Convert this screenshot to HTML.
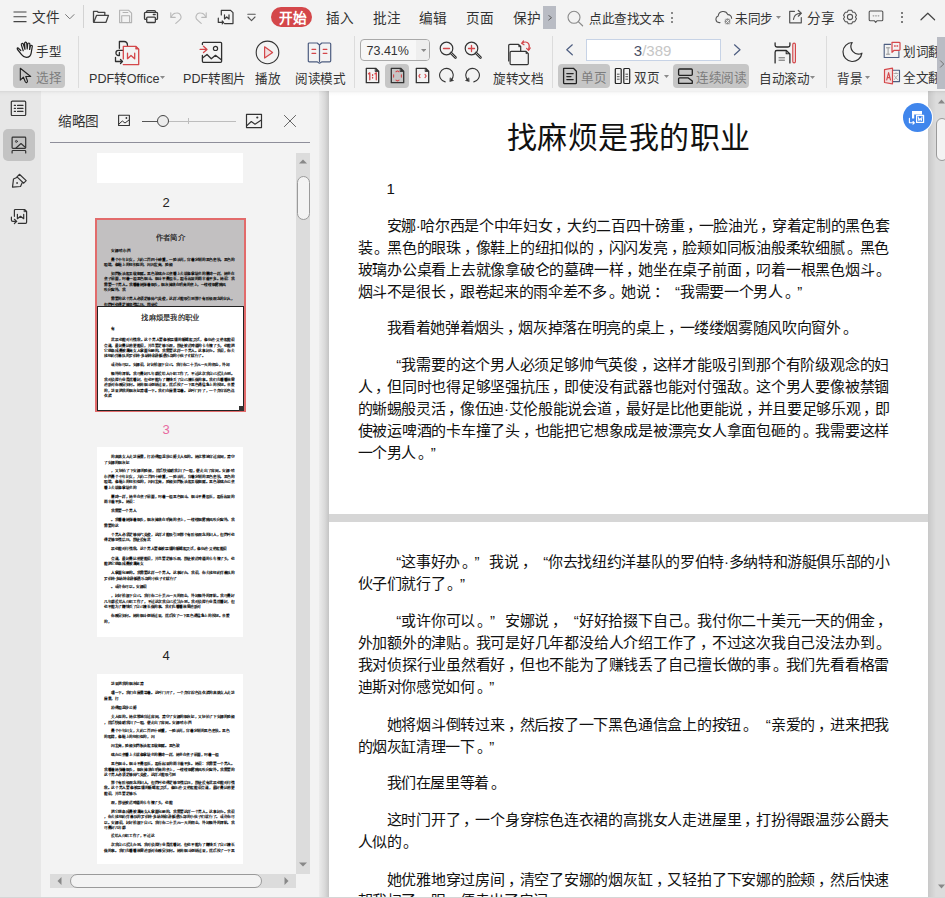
<!DOCTYPE html><html lang="zh-CN"><head><meta charset="utf-8"><style>
*{margin:0;padding:0;box-sizing:border-box}
html,body{width:945px;height:898px;overflow:hidden;background:#f3f3f3;font-family:"Liberation Sans",sans-serif;color:#333}
.a{position:absolute;white-space:nowrap}
.pg{position:absolute;background:#fff;overflow:hidden}
.ln{position:absolute;white-space:nowrap;color:#111;font-size:15px;line-height:21px;letter-spacing:-0.35px}
.q1{display:inline-block;width:14.8px;text-align:right;text-align-last:right;letter-spacing:0}
.q2{display:inline-block;width:14.8px;text-align:left;text-align-last:left;letter-spacing:0}
.tl{position:absolute;white-space:nowrap;color:#000;font-size:15px;line-height:21px;letter-spacing:-0.35px;-webkit-text-stroke:0.65px #000}
.j{text-align:justify;text-align-last:justify}
.cm{position:relative;left:3px}
.cm2{position:relative;left:2px}
</style></head><body><div class="a" style="left:0px;top:0px;width:945px;height:91px;background:#f3f3f3"></div>
<svg class="a" style="left:13px;top:11px;" width="14" height="12" viewBox="0 0 14 12" fill="none" stroke="#333" stroke-width="1.2" stroke-linecap="round" stroke-linejoin="round"><path d="M0.5 1H13.5M0.5 5.8H13.5M0.5 10.6H13.5" stroke="#444" stroke-width="1.1" stroke-linecap="butt"/></svg>
<div class="a" style="left:31.5px;top:6.6px;font-size:13px;line-height:20px;color:#333;transform:scale(1.05);transform-origin:0 0;">文件</div>
<svg class="a" style="left:65px;top:14px;" width="10" height="6" viewBox="0 0 10 6" fill="none" stroke="#333" stroke-width="1.2" stroke-linecap="round" stroke-linejoin="round"><path d="M0.6 0.6L4.8 4.8L9 0.6" stroke="#777" stroke-width="1"/></svg>
<div class="a" style="left:83px;top:5px;width:1px;height:23px;background:#d3d3d3"></div>
<svg class="a" style="left:92px;top:10px;" width="18" height="14" viewBox="0 0 18 14" fill="none" stroke="#333" stroke-width="1.2" stroke-linecap="round" stroke-linejoin="round"><path d="M1.5 12V1.3H5.2L6.2 2.3H12.8V5.2" stroke="#444" stroke-width="1.3"/><path d="M4.5 5.4H16.5L14 12.3H1.8Z" stroke="#444" stroke-width="1.3"/></svg>
<svg class="a" style="left:118px;top:9px;" width="15" height="15" viewBox="0 0 15 15" fill="none" stroke="#333" stroke-width="1.2" stroke-linecap="round" stroke-linejoin="round"><path d="M1.6 1.3H10.7L13.6 4.2V13.6H1.6Z" stroke="#b3b3b3" stroke-width="1.1"/><path d="M5 3.5H9.8M3.7 13.3V6.7H11.6V13.3" stroke="#b3b3b3" stroke-width="1.1"/></svg>
<svg class="a" style="left:143px;top:9px;" width="16" height="15" viewBox="0 0 16 15" fill="none" stroke="#333" stroke-width="1.2" stroke-linecap="round" stroke-linejoin="round"><path d="M3.7 3.3V2.5Q3.7 1.6 4.6 1.6H11.5Q12.4 1.6 12.4 2.5V3.3" stroke="#3c3c3c" stroke-width="1.3"/><path d="M3.6 10.3H2.4Q1.5 10.3 1.5 9.4V4.3Q1.5 3.4 2.4 3.4H13.6Q14.5 3.4 14.5 4.3V9.4Q14.5 10.3 13.6 10.3H12.4" stroke="#3c3c3c" stroke-width="1.3"/><path d="M4.6 8.2H11.5Q12.4 8.2 12.4 9.1V12.6Q12.4 13.5 11.5 13.5H4.6Q3.7 13.5 3.7 12.6V9.1Q3.7 8.2 4.6 8.2Z M10.3 5.5H12.2" stroke="#3c3c3c" stroke-width="1.3"/></svg>
<svg class="a" style="left:169px;top:11px;" width="14" height="13" viewBox="0 0 14 13" fill="none" stroke="#333" stroke-width="1.2" stroke-linecap="round" stroke-linejoin="round"><path d="M1.8 1.8V6.4H6.2" stroke="#b8b8b8" stroke-width="1.1"/><path d="M2.2 6C3.5 3.2 5.5 2 7.5 2A4 4 0 0 1 10.2 9.3L6.8 12.4" stroke="#b8b8b8" stroke-width="1.1"/></svg>
<svg class="a" style="left:194px;top:11px;" width="14" height="13" viewBox="0 0 14 13" fill="none" stroke="#333" stroke-width="1.2" stroke-linecap="round" stroke-linejoin="round"><path d="M12.2 1.8V6.4H7.8" stroke="#b8b8b8" stroke-width="1.1"/><path d="M11.8 6C10.5 3.2 8.5 2 6.5 2A4 4 0 0 0 3.8 9.3L7.2 12.4" stroke="#b8b8b8" stroke-width="1.1"/></svg>
<svg class="a" style="left:217px;top:9px;" width="17" height="16" viewBox="0 0 17 16" fill="none" stroke="#333" stroke-width="1.2" stroke-linecap="round" stroke-linejoin="round"><path d="M4.3 6V1.3H13.6L16 3.7V14.6H7.5" stroke="#3a3a3a" stroke-width="1.2"/><path d="M1.3 9.2V13.4H6.6M5.2 12L6.6 13.4L5.2 14.8" stroke="#3a3a3a" stroke-width="1.2"/><path d="M7.5 5.8V10L9.7 8L12 10V5.8" stroke="#3a3a3a" stroke-width="1.2"/></svg>
<svg class="a" style="left:247px;top:13px;" width="9" height="9" viewBox="0 0 9 9" fill="none" stroke="#333" stroke-width="1.2" stroke-linecap="round" stroke-linejoin="round"><path d="M0.8 1.3H8.2" stroke="#555" stroke-width="1.1"/><path d="M1 4L4.5 7.6L8 4" stroke="#555" stroke-width="1.1"/></svg>
<div class="a" style="left:271px;top:7px;width:41px;height:20px;background:#d4474a;border-radius:10px"></div>
<div class="a" style="left:278.5px;top:7.7px;font-size:13px;line-height:20px;color:#fff;transform:scale(1.05);transform-origin:0 0;font-weight:bold">开始</div>
<div class="a" style="left:325.8px;top:8.0px;font-size:13px;line-height:20px;color:#333;transform:scale(1.05);transform-origin:0 0;">插入</div>
<div class="a" style="left:373.2px;top:8.0px;font-size:13px;line-height:20px;color:#333;transform:scale(1.05);transform-origin:0 0;">批注</div>
<div class="a" style="left:419.0px;top:8.0px;font-size:13px;line-height:20px;color:#333;transform:scale(1.05);transform-origin:0 0;">编辑</div>
<div class="a" style="left:466.0px;top:8.0px;font-size:13px;line-height:20px;color:#333;transform:scale(1.05);transform-origin:0 0;">页面</div>
<div class="a" style="left:513.2px;top:8.0px;font-size:13px;line-height:20px;color:#333;transform:scale(1.05);transform-origin:0 0;">保护</div>
<div class="a" style="left:543px;top:6px;width:13px;height:23px;background:#b9bcc4"></div>
<svg class="a" style="left:547.5px;top:14.5px;" width="5" height="6" viewBox="0 0 5 6" fill="none" stroke="#333" stroke-width="1.2" stroke-linecap="round" stroke-linejoin="round"><path d="M0.7 0.5L3.5 2.7L0.7 5" stroke="#555" stroke-width="0.9"/></svg>
<svg class="a" style="left:567px;top:10px;" width="17" height="17" viewBox="0 0 17 17" fill="none" stroke="#333" stroke-width="1.2" stroke-linecap="round" stroke-linejoin="round"><circle cx="7" cy="7.3" r="6" stroke="#8a8a8a" stroke-width="1.1"/><path d="M11.3 11.6L15.6 15.8" stroke="#8a8a8a" stroke-width="1.2"/></svg>
<div class="a" style="left:589.2px;top:7.8px;font-size:12px;line-height:20px;color:#333;transform:scale(1.05);transform-origin:0 0;">点此查找文本</div>
<div class="a" style="left:670.5px;top:12px;width:2px;height:2px;background:#666;border-radius:1px"></div>
<div class="a" style="left:670.5px;top:16.5px;width:2px;height:2px;background:#666;border-radius:1px"></div>
<div class="a" style="left:670.5px;top:21px;width:2px;height:2px;background:#666;border-radius:1px"></div>
<svg class="a" style="left:715px;top:9px;" width="18" height="16" viewBox="0 0 18 16" fill="none" stroke="#333" stroke-width="1.2" stroke-linecap="round" stroke-linejoin="round"><path d="M5 13.6H4.2A3.4 3.4 0 0 1 3.2 7A5 5 0 0 1 12.8 5.6A3.6 3.6 0 0 1 16.6 9.2" stroke="#555" stroke-width="1.1"/><circle cx="12.6" cy="12.4" r="3.4" fill="#8e8e8e" stroke="#f3f3f3" stroke-width="0.8"/><path d="M11.3 11.1L13.9 13.7M13.9 11.1L11.3 13.7" stroke="#fff" stroke-width="0.9"/></svg>
<div class="a" style="left:735.0px;top:8.0px;font-size:12px;line-height:20px;color:#333;transform:scale(1.05);transform-origin:0 0;">未同步</div>
<svg class="a" style="left:776px;top:16px;" width="5" height="3" viewBox="0 0 5 3" fill="none" stroke="#333" stroke-width="1.2" stroke-linecap="round" stroke-linejoin="round"><path d="M0 0H5L2.5 3Z" fill="#8a8a8a" stroke="none"/></svg>
<svg class="a" style="left:788px;top:9px;" width="16" height="15" viewBox="0 0 16 15" fill="none" stroke="#333" stroke-width="1.2" stroke-linecap="round" stroke-linejoin="round"><path d="M6.5 2.3H1.7V13.8H13.3V8.5" stroke="#555" stroke-width="1.2"/><path d="M5.5 10.3C6 6.2 8.2 4.3 12.8 4.3" stroke="#555" stroke-width="1.2"/><path d="M10.3 1.5L13.3 4.3L10.3 7.2" stroke="#555" stroke-width="1.2"/></svg>
<div class="a" style="left:807.4px;top:8.0px;font-size:13px;line-height:20px;color:#333;transform:scale(1.05);transform-origin:0 0;">分享</div>
<svg class="a" style="left:842px;top:9px;" width="16" height="16" viewBox="0 0 16 16" fill="none" stroke="#333" stroke-width="1.2" stroke-linecap="round" stroke-linejoin="round"><path d="M6.3 1.3H9.7L10.6 3.1L12.7 3.3L14.5 6.2L13.4 8L14.5 9.8L12.7 12.7L10.6 12.9L9.7 14.7H6.3L5.4 12.9L3.3 12.7L1.5 9.8L2.6 8L1.5 6.2L3.3 3.3L5.4 3.1Z" stroke="#555" stroke-width="1.1"/><circle cx="8" cy="8" r="2.6" stroke="#555" stroke-width="1.1"/></svg>
<svg class="a" style="left:868px;top:10px;" width="16" height="14" viewBox="0 0 16 14" fill="none" stroke="#333" stroke-width="1.2" stroke-linecap="round" stroke-linejoin="round"><path d="M2.2 1H13.8Q14.8 1 14.8 2V9.7Q14.8 10.7 13.8 10.7H9.2L7.7 12.3L6.2 10.7H2.2Q1.2 10.7 1.2 9.7V2Q1.2 1 2.2 1Z" stroke="#555" stroke-width="1.1"/><path d="M5.2 5.8H5.8M7.7 5.8H8.3M10.2 5.8H10.8" stroke="#9a9a9a" stroke-width="1.3"/></svg>
<div class="a" style="left:901px;top:11.5px;width:2px;height:2px;background:#555;border-radius:1px"></div>
<div class="a" style="left:901px;top:16px;width:2px;height:2px;background:#555;border-radius:1px"></div>
<div class="a" style="left:901px;top:20.8px;width:2px;height:2px;background:#555;border-radius:1px"></div>
<svg class="a" style="left:920px;top:12px;" width="16" height="9" viewBox="0 0 16 9" fill="none" stroke="#333" stroke-width="1.2" stroke-linecap="round" stroke-linejoin="round"><path d="M1 7.8L7.8 1.2L14.6 7.8" stroke="#444" stroke-width="1.2"/></svg>
<svg class="a" style="left:16px;top:41px;" width="18" height="18" viewBox="0 0 18 18" fill="none" stroke="#333" stroke-width="1.2" stroke-linecap="round" stroke-linejoin="round"><path d="M4.8 9.5L2.6 7.3Q1.4 6.4 1.2 7.6Q1.2 8.3 1.9 9L5.6 13.6Q7.6 16.3 10.3 16.3Q14.6 16.3 15.2 11.8L16.3 5.4Q16.4 4.3 15.4 4.3Q14.6 4.3 14.3 5.4L13.6 8.5L13.9 3.2Q13.9 2 12.8 2Q11.9 2 11.7 3.2L11.2 8L10.7 2.1Q10.5 1 9.5 1.1Q8.5 1.3 8.6 2.4L9 8.4L7.4 3.3Q7 2.2 6 2.5Q5.1 2.9 5.4 4L7.2 9.8" stroke="#222" stroke-width="1.2"/></svg>
<div class="a" style="left:36.0px;top:40.8px;font-size:12px;line-height:20px;color:#333;transform:scale(1.05);transform-origin:0 0;">手型</div>
<div class="a" style="left:13px;top:64px;width:52px;height:24px;background:#c6c6c6;border-radius:4px"></div>
<svg class="a" style="left:19px;top:67px;" width="14" height="18" viewBox="0 0 14 18" fill="none" stroke="#333" stroke-width="1.2" stroke-linecap="round" stroke-linejoin="round"><path d="M1.3 1.3V13.2L4.4 10.2L6.3 14.8Q6.9 15.9 7.9 15.4Q8.8 14.9 8.4 13.8L6.8 9.5H11.7Z" stroke="#222" stroke-width="1.1"/></svg>
<div class="a" style="left:36.0px;top:67.2px;font-size:12px;line-height:20px;color:#7d7d7d;transform:scale(1.05);transform-origin:0 0;">选择</div>
<div class="a" style="left:78px;top:36px;width:1px;height:52px;background:#dcdcdc"></div>
<svg class="a" style="left:113px;top:40px;" width="27" height="26" viewBox="0 0 27 26" fill="none" stroke="#333" stroke-width="1.2" stroke-linecap="round" stroke-linejoin="round"><path d="M6.4 8.3V1.5H11C13 1.5 14.5 3 14.5 5.5" stroke="#2f2f2f" stroke-width="1.3"/><path d="M9.8 10.4H5.5A2.5 2.5 0 0 0 5.5 15.5H6.4V12.5" stroke="#2f2f2f" stroke-width="1.3"/><path d="M2.5 17.3V21.5H9.5M7.5 19.5L9.5 21.5L7.5 23.5" stroke="#2f2f2f" stroke-width="1.3"/><path d="M10.3 18.9V6.4H23L25.7 9.1V24.6H10.3" stroke="#d4474a" stroke-width="1.3"/><path d="M14.5 13.2V18.7L18 15.5L21.7 18.7V13.2" stroke="#d4474a" stroke-width="1.3"/><path d="M23 6.6L25.5 9.1H23Z" fill="#d4474a" stroke="#d4474a" stroke-width="0.8"/></svg>
<div class="a" style="left:88.7px;top:67.7px;font-size:12px;line-height:20px;color:#333;transform:scale(1.05);transform-origin:0 0;">PDF转Office</div>
<svg class="a" style="left:160px;top:75.5px;" width="5" height="3" viewBox="0 0 5 3" fill="none" stroke="#333" stroke-width="1.2" stroke-linecap="round" stroke-linejoin="round"><path d="M0 0H5L2.5 3Z" fill="#8a8a8a" stroke="none"/></svg>
<svg class="a" style="left:199px;top:41px;" width="24" height="23" viewBox="0 0 24 23" fill="none" stroke="#333" stroke-width="1.2" stroke-linecap="round" stroke-linejoin="round"><path d="M3.4 3.6V2.3A1 1 0 0 1 4.4 1.3H21.6A1 1 0 0 1 22.6 2.3V20.3A1 1 0 0 1 21.6 21.3H4.4A1 1 0 0 1 3.4 20.3V14.4" stroke="#2f2f2f" stroke-width="1.3"/><path d="M3.5 17L8 13.5L12.3 17.8L16.5 14.3L22.3 18.8" stroke="#2f2f2f" stroke-width="1.3"/><circle cx="16.5" cy="7.4" r="2.1" stroke="#2f2f2f" stroke-width="1.2"/><path d="M1.1 8.4H8M4.5 5.2L8 8.4L4.5 11.6" stroke="#d4474a" stroke-width="1.3"/></svg>
<div class="a" style="left:182.5px;top:67.6px;font-size:12px;line-height:20px;color:#333;transform:scale(1.05);transform-origin:0 0;">PDF转图片</div>
<svg class="a" style="left:255px;top:40px;" width="25" height="25" viewBox="0 0 25 25" fill="none" stroke="#333" stroke-width="1.2" stroke-linecap="round" stroke-linejoin="round"><circle cx="12.5" cy="12.4" r="11.3" stroke="#333" stroke-width="1.1"/><path d="M9.6 6.8L17.6 12.4L9.6 18Z" stroke="#d4474a" fill="#f1dfe0" stroke-width="1.2"/></svg>
<div class="a" style="left:255.0px;top:67.9px;font-size:12px;line-height:20px;color:#333;transform:scale(1.05);transform-origin:0 0;">播放</div>
<svg class="a" style="left:307px;top:42px;" width="26" height="22" viewBox="0 0 26 22" fill="none" stroke="#333" stroke-width="1.2" stroke-linecap="round" stroke-linejoin="round"><path d="M2.3 1H10.2L12.5 3L14.8 1H22.7Q23.7 1 23.7 2V18.8Q23.7 19.8 22.7 19.8H15L12.5 21.2L10 19.8H2.3Q1.3 19.8 1.3 18.8V2Q1.3 1 2.3 1Z M12.5 3V19.5" stroke="#4d5d80" stroke-width="1.2"/><path d="M5 7.3H8.7M5 11.3H8.7M16.2 7.3H19.9M16.2 11.3H19.9" stroke="#d4474a" stroke-width="1.3"/></svg>
<div class="a" style="left:295.3px;top:67.9px;font-size:12px;line-height:20px;color:#333;transform:scale(1.05);transform-origin:0 0;">阅读模式</div>
<div class="a" style="left:354px;top:36px;width:1px;height:52px;background:#dcdcdc"></div>
<div class="a" style="left:360px;top:39px;width:70px;height:22px;background:#f7f7f7;border:1.2px solid #a9a9a9;border-radius:4px"></div>
<div class="a" style="left:416.3px;top:40.2px;width:12.5px;height:19.6px;background:#eeeeee;border-radius:0 3px 3px 0"></div>
<svg class="a" style="left:420.8px;top:48.8px;" width="5.4" height="3" viewBox="0 0 5.4 3" fill="none" stroke="#333" stroke-width="1.2" stroke-linecap="round" stroke-linejoin="round"><path d="M0 0H5.4L2.7 3Z" fill="#8a8a8a" stroke="none"/></svg>
<div class="a" style="left:366.5px;top:42px;font-size:12.5px;line-height:18px;color:#333">73.41%</div>
<svg class="a" style="left:439px;top:41px;" width="19" height="19" viewBox="0 0 19 19" fill="none" stroke="#333" stroke-width="1.2" stroke-linecap="round" stroke-linejoin="round"><circle cx="7.5" cy="7.5" r="6.3" stroke="#333" stroke-width="1.2"/><path d="M12 12L16.5 16.5" stroke="#333" stroke-width="2.6"/><path d="M12 12L16.5 16.5" stroke="#f3f3f3" stroke-width="0.6"/><path d="M4.5 7.5H10.5" stroke="#d4474a" stroke-width="1.3"/></svg>
<svg class="a" style="left:464px;top:41px;" width="19" height="19" viewBox="0 0 19 19" fill="none" stroke="#333" stroke-width="1.2" stroke-linecap="round" stroke-linejoin="round"><circle cx="7.5" cy="7.5" r="6.3" stroke="#333" stroke-width="1.2"/><path d="M12 12L16.5 16.5" stroke="#333" stroke-width="2.6"/><path d="M12 12L16.5 16.5" stroke="#f3f3f3" stroke-width="0.6"/><path d="M4.5 7.5H10.5M7.5 4.5V10.5" stroke="#d4474a" stroke-width="1.3"/></svg>
<svg class="a" style="left:504px;top:39px;" width="28" height="27" viewBox="0 0 28 27" fill="none" stroke="#333" stroke-width="1.2" stroke-linecap="round" stroke-linejoin="round"><path d="M4.7 22V6.5Q4.7 5.3 5.9 5.3H14.5L16.7 7.5V12" stroke="#333" stroke-width="1.2"/><path d="M7.3 12.3H22L24.3 14.6V24.5Q24.3 25.6 23.2 25.6H7.3Q6.1 25.6 6.1 24.5V13.5Q6.1 12.3 7.3 12.3Z" stroke="#333" fill="#f3f3f3" stroke-width="1.2"/><path d="M15 6L16.5 7.4L15.2 7.8Z M22.3 13L23.5 14.3L22.4 14.6Z" fill="#333" stroke="#333" stroke-width="0.8"/><path d="M18.5 4.2C20 2.5 23 2.5 24.6 4.7C25.6 6.3 25.5 8.3 24.6 10.5" stroke="#d4474a" stroke-width="1.2"/><path d="M19.5 2L17.6 4.3L20 5.8M22.6 9.3L24.6 11.3L26.3 9" stroke="#d4474a" stroke-width="1.2"/></svg>
<div class="a" style="left:493.2px;top:67.9px;font-size:12px;line-height:20px;color:#333;transform:scale(1.05);transform-origin:0 0;">旋转文档</div>
<svg class="a" style="left:365px;top:67px;" width="15" height="17" viewBox="0 0 15 17" fill="none" stroke="#333" stroke-width="1.2" stroke-linecap="round" stroke-linejoin="round"><path d="M1.3 1.3H10.7L13.7 4.3V15.7H1.3Z" stroke="#333" stroke-width="1.3"/><path d="M10.5 1.5L13.5 4.5H10.5Z" fill="#333" stroke="#333" stroke-width="0.8"/><path d="M3.5 6.8L4.8 5.8V12.8M10 6.8L11.3 5.8V12.8M7.6 7.6V8.4M7.6 10.3V11.1" stroke="#d4474a" stroke-width="1.3"/></svg>
<div class="a" style="left:385px;top:64px;width:24px;height:24px;background:#c6c6c6;border-radius:4px"></div>
<svg class="a" style="left:390px;top:67px;" width="15" height="17" viewBox="0 0 15 17" fill="none" stroke="#333" stroke-width="1.2" stroke-linecap="round" stroke-linejoin="round"><path d="M1.3 1.3H10.7L13.7 4.3V15.7H1.3Z" stroke="#333" stroke-width="1.3"/><path d="M10.5 1.5L13.5 4.5H10.5Z" fill="#333" stroke="#333" stroke-width="0.8"/><path d="M6 4.8L7.5 3.9L9 4.8M6 13.1L7.5 14L9 13.1M3.6 7.8V10.1M11.4 7.8V10.1" stroke="#d4474a" stroke-width="1.1"/></svg>
<svg class="a" style="left:415px;top:67px;" width="15" height="17" viewBox="0 0 15 17" fill="none" stroke="#333" stroke-width="1.2" stroke-linecap="round" stroke-linejoin="round"><path d="M1.3 1.3H10.7L13.7 4.3V15.7H1.3Z" stroke="#333" stroke-width="1.3"/><path d="M10.5 1.5L13.5 4.5H10.5Z" fill="#333" stroke="#333" stroke-width="0.8"/><path d="M5 7.4L3.8 9L5 10.6M10 7.4L11.2 9L10 10.6" stroke="#d4474a" stroke-width="1.1"/></svg>
<svg class="a" style="left:439px;top:67px;" width="16" height="17" viewBox="0 0 16 17" fill="none" stroke="#333" stroke-width="1.2" stroke-linecap="round" stroke-linejoin="round"><path d="M6.2 14.9A6.8 6.8 0 1 1 12.6 12.6" stroke="#333" stroke-width="1.1"/><path d="M11.1 14.4L14.5 13.5L11.4 11Z" fill="#333" stroke="#333" stroke-width="0.6"/></svg>
<svg class="a" style="left:464px;top:67px;" width="16" height="17" viewBox="0 0 16 17" fill="none" stroke="#333" stroke-width="1.2" stroke-linecap="round" stroke-linejoin="round"><path d="M9.8 14.9A6.8 6.8 0 1 0 3.4 12.6" stroke="#333" stroke-width="1.1"/><path d="M4.9 14.4L1.5 13.5L4.6 11Z" fill="#333" stroke="#333" stroke-width="0.6"/></svg>
<div class="a" style="left:552px;top:36px;width:1px;height:52px;background:#dcdcdc"></div>
<svg class="a" style="left:565px;top:44px;" width="9" height="12" viewBox="0 0 9 12" fill="none" stroke="#333" stroke-width="1.2" stroke-linecap="round" stroke-linejoin="round"><path d="M7.3 0.8L1.8 5.8L7.3 10.8" stroke="#4d5d80" stroke-width="1.2"/></svg>
<div class="a" style="left:586px;top:39px;width:135px;height:22px;background:#fff;border:1px solid #c7d3e6"></div>
<div class="a" style="left:633.8px;top:41px;font-size:15px;line-height:20px"><span style="color:#4a5066">3</span><span style="color:#c6c6c6">/389</span></div>
<svg class="a" style="left:733px;top:44px;" width="9" height="12" viewBox="0 0 9 12" fill="none" stroke="#333" stroke-width="1.2" stroke-linecap="round" stroke-linejoin="round"><path d="M1.5 0.8L7 5.8L1.5 10.8" stroke="#4d5d80" stroke-width="1.2"/></svg>
<div class="a" style="left:558px;top:64px;width:52px;height:24px;background:#c6c6c6;border-radius:4px"></div>
<svg class="a" style="left:562px;top:67px;" width="16" height="18" viewBox="0 0 16 18" fill="none" stroke="#333" stroke-width="1.2" stroke-linecap="round" stroke-linejoin="round"><path d="M1.6 1.3H11.4L14.4 4.3V15.8Q14.4 16.7 13.5 16.7H2.5Q1.6 16.7 1.6 15.8Z" stroke="#222" stroke-width="1.3"/><path d="M4.8 6.6H11.2M4.8 9.6H9M4.8 12.6H11.2" stroke="#222" stroke-width="1.2"/></svg>
<div class="a" style="left:581.0px;top:67.2px;font-size:12px;line-height:20px;color:#7d7d7d;transform:scale(1.05);transform-origin:0 0;">单页</div>
<svg class="a" style="left:614px;top:67px;" width="17" height="18" viewBox="0 0 17 18" fill="none" stroke="#333" stroke-width="1.2" stroke-linecap="round" stroke-linejoin="round"><path d="M2.3 1.5H6.2Q7.2 1.5 7.2 2.5V15.5Q7.2 16.5 6.2 16.5H2.3Q1.3 16.5 1.3 15.5V2.5Q1.3 1.5 2.3 1.5Z M10.8 1.5H14.7Q15.7 1.5 15.7 2.5V15.5Q15.7 16.5 14.7 16.5H10.8Q9.8 16.5 9.8 15.5V2.5Q9.8 1.5 10.8 1.5Z" stroke="#222" stroke-width="1.2"/><path d="M3.3 7.2H5.2M3.3 9.7H5.2M3.3 12.2H5.2M11.8 7.2H13.7M11.8 9.7H13.7M11.8 12.2H13.7" stroke="#555" stroke-width="1"/></svg>
<div class="a" style="left:634.0px;top:67.2px;font-size:12px;line-height:20px;color:#333;transform:scale(1.05);transform-origin:0 0;">双页</div>
<svg class="a" style="left:663.5px;top:75px;" width="5" height="3" viewBox="0 0 5 3" fill="none" stroke="#333" stroke-width="1.2" stroke-linecap="round" stroke-linejoin="round"><path d="M0 0H5L2.5 3Z" fill="#8a8a8a" stroke="none"/></svg>
<div class="a" style="left:673px;top:64px;width:76px;height:24px;background:#c6c6c6;border-radius:4px"></div>
<svg class="a" style="left:677px;top:67px;" width="17" height="18" viewBox="0 0 17 18" fill="none" stroke="#333" stroke-width="1.2" stroke-linecap="round" stroke-linejoin="round"><path d="M2.5 2H14.3Q15.3 2 15.3 3V7.5Q15.3 8.3 14.3 8.3H2.5Q1.6 8.3 1.6 7.5V3Q1.6 2 2.5 2Z" stroke="#222" stroke-width="1.3"/><path d="M1.6 16.3V11.8Q1.6 10.8 2.5 10.8H11L15.3 14V16.3H1.6Z" stroke="#222" stroke-width="1.3"/></svg>
<div class="a" style="left:696.0px;top:67.2px;font-size:12px;line-height:20px;color:#7d7d7d;transform:scale(1.05);transform-origin:0 0;">连续阅读</div>
<svg class="a" style="left:774px;top:42px;" width="23" height="22" viewBox="0 0 23 22" fill="none" stroke="#333" stroke-width="1.2" stroke-linecap="round" stroke-linejoin="round"><path d="M1.1 0.8V3.2Q1.1 5 2.9 5H14.1Q15.9 5 15.9 3.2V0.8" stroke="#2c2c2c" stroke-width="1.3"/><path d="M1.1 20.9V10.3Q1.1 8.5 2.9 8.5H12.3L15.9 12V20.9" stroke="#2c2c2c" stroke-width="1.3"/><path d="M12.2 8.8V11.8H15.5" stroke="#2c2c2c" stroke-width="1.1"/><path d="M5 15.8H10.5M5 18.2H10.5" stroke="#555" stroke-width="0.9"/><rect x="18.8" y="1.1" width="2.6" height="19.8" rx="1.3" stroke="#d4474a" stroke-width="1.2"/></svg>
<div class="a" style="left:758.5px;top:67.9px;font-size:12px;line-height:20px;color:#333;transform:scale(1.05);transform-origin:0 0;">自动滚动</div>
<svg class="a" style="left:809.5px;top:75.5px;" width="5" height="3" viewBox="0 0 5 3" fill="none" stroke="#333" stroke-width="1.2" stroke-linecap="round" stroke-linejoin="round"><path d="M0 0H5L2.5 3Z" fill="#8a8a8a" stroke="none"/></svg>
<div class="a" style="left:826px;top:36px;width:1px;height:52px;background:#dcdcdc"></div>
<svg class="a" style="left:842px;top:41px;" width="22" height="22" viewBox="0 0 22 22" fill="none" stroke="#333" stroke-width="1.2" stroke-linecap="round" stroke-linejoin="round"><path d="M10.15 1.51A9.5 9.5 0 1 0 19.93 12.17A7.5 7.5 0 0 1 10.15 1.51Z" stroke="#333" stroke-width="1.2"/></svg>
<div class="a" style="left:837.0px;top:67.9px;font-size:12px;line-height:20px;color:#333;transform:scale(1.05);transform-origin:0 0;">背景</div>
<svg class="a" style="left:864.6px;top:75.5px;" width="5" height="3" viewBox="0 0 5 3" fill="none" stroke="#333" stroke-width="1.2" stroke-linecap="round" stroke-linejoin="round"><path d="M0 0H5L2.5 3Z" fill="#8a8a8a" stroke="none"/></svg>
<svg class="a" style="left:883px;top:41px;" width="18" height="18" viewBox="0 0 18 18" fill="none" stroke="#333" stroke-width="1.2" stroke-linecap="round" stroke-linejoin="round"><path d="M7.6 3.4H1.2V16.5H15.9V10.5" stroke="#4d5d80" stroke-width="1.1"/><path d="M3.4 6.8H6.8M5.1 6.8V13.2M3.4 13.2H6.8" stroke="#9a9a9a" stroke-width="1"/><path d="M9 1.3H16.2Q17 1.3 17 2.1V8.5Q17 9.3 16.2 9.3H11.2L9 11.3Z" stroke="#d4474a" stroke-width="1.2"/><path d="M11.6 5H12.2M14 5H14.6" stroke="#d4474a" stroke-width="1.4"/></svg>
<div class="a" style="left:903.2px;top:40.8px;font-size:12px;line-height:20px;color:#333;transform:scale(1.05);transform-origin:0 0;">划词翻译</div>
<svg class="a" style="left:883px;top:67px;" width="18" height="18" viewBox="0 0 18 18" fill="none" stroke="#333" stroke-width="1.2" stroke-linecap="round" stroke-linejoin="round"><path d="M9 3.2H16.5V14.6H9" stroke="#4d5d80" stroke-width="1.1"/><path d="M11 6.5H15M13 5.6V6.5M11.3 12.6L14.7 8.2M11.5 8.8C12.5 10.7 13.6 12 15 12.7" stroke="#a0a0a0" stroke-width="0.8"/><path d="M1.5 2.7L9.5 1.2V16.8L1.5 15.5Z" stroke="#d4474a" fill="#f3e2e3" stroke-width="1.2"/><path d="M3.7 13L5.6 5.6L7.5 13M4.4 10.6H6.8" stroke="#d4474a" stroke-width="1.1"/></svg>
<div class="a" style="left:903.2px;top:66.7px;font-size:12px;line-height:20px;color:#333;transform:scale(1.05);transform-origin:0 0;">全文翻译</div>
<div class="a" style="left:937px;top:37px;width:8px;height:52px;background:#b9bcc4"></div>
<svg class="a" style="left:939px;top:60px;" width="6" height="8" viewBox="0 0 6 8" fill="none" stroke="#333" stroke-width="1.2" stroke-linecap="round" stroke-linejoin="round"><path d="M1.5 0.8L4.7 4L1.5 7.2" stroke="#6a6a6a" stroke-width="0.9"/></svg>
<div class="a" style="left:0px;top:91px;width:41px;height:807px;background:#e7e7e7"></div>
<svg class="a" style="left:10px;top:100px;" width="17" height="17" viewBox="0 0 17 17" fill="none" stroke="#333" stroke-width="1.2" stroke-linecap="round" stroke-linejoin="round"><path d="M2.3 1.2H14.7Q15.7 1.2 15.7 2.2V14.5Q15.7 15.5 14.7 15.5H2.3Q1.3 15.5 1.3 14.5V2.2Q1.3 1.2 2.3 1.2Z" stroke="#333" stroke-width="1.2"/><path d="M4.3 5.4H5.5M7.5 5.4H13M4.3 8.4H5.5M7.5 8.4H13M4.3 11.4H5.5M7.5 11.4H13" stroke="#333" stroke-width="1.1"/></svg>
<div class="a" style="left:3px;top:129px;width:32px;height:32px;background:#c3c3c3;border-radius:5px"></div>
<svg class="a" style="left:10px;top:135px;" width="18" height="19" viewBox="0 0 18 19" fill="none" stroke="#333" stroke-width="1.2" stroke-linecap="round" stroke-linejoin="round"><path d="M2.9 2.2H14.9Q15.7 2.2 15.7 3V12.5Q15.7 13.3 14.9 13.3H2.9Q2.1 13.3 2.1 12.5V3Q2.1 2.2 2.9 2.2Z" stroke="#333" stroke-width="1.2"/><path d="M6 13L11 8.5L15.5 12.5" stroke="#333" stroke-width="1.1"/><circle cx="6.4" cy="6.4" r="1" stroke="#333" stroke-width="0.9"/><path d="M2.1 18V16.3Q2.1 15.5 2.9 15.5H14.9Q15.7 15.5 15.7 16.3V18" stroke="#333" stroke-width="1.2"/></svg>
<svg class="a" style="left:10px;top:171px;" width="18" height="19" viewBox="0 0 18 19" fill="none" stroke="#333" stroke-width="1.2" stroke-linecap="round" stroke-linejoin="round"><path d="M9.4 3.3L16.2 9.6L13.7 12.2L7 5.9Z" stroke="#333" stroke-width="1.2"/><path d="M7.3 6.2L3.5 8L2.5 16.1L10.5 15.5L12.2 11.8" stroke="#333" stroke-width="1.2"/><rect x="6.3" y="11.2" width="1.6" height="1.6" fill="#333" stroke="none"/></svg>
<svg class="a" style="left:9px;top:207px;" width="20" height="19" viewBox="0 0 20 19" fill="none" stroke="#333" stroke-width="1.2" stroke-linecap="round" stroke-linejoin="round"><path d="M5.4 9.3V3.5Q5.4 2.5 6.4 2.5H15.6L17.6 4.4V15.3Q17.6 16.3 16.6 16.3H9.3" stroke="#333" stroke-width="1.2"/><path d="M15.3 2.7L17.4 4.7H15.3Z" fill="#333" stroke="#333" stroke-width="0.6"/><path d="M8.4 7.3V11.7L11.5 9.3L14.7 11.7V7.3" stroke="#333" stroke-width="1.2"/><path d="M2.4 10.2V13Q2.4 14.4 3.8 14.4H7.7M5.4 12.3L7.7 14.4L5.4 16.5" stroke="#333" stroke-width="1.2"/></svg>
<div class="a" style="left:329px;top:91px;width:616px;height:807px;background:#d6d6d6"></div>
<div class="pg" style="left:329px;top:91px;width:599px;height:423px"><div class="ln" style="left:0px;width:599px;text-align:center;top:26.0px;font-size:30px;line-height:42.0px;letter-spacing:0.5px">找麻烦是我的职业</div><div class="ln" style="left:57.5px;top:86.8px">1</div><div class="ln j" style="left:57.5px;width:502.5px;top:123.8px">安娜·哈尔西是个中年妇女<span class="cm">，</span>大约二百四十磅重<span class="cm">，</span>一脸油光<span class="cm">，</span>穿着定制的黑色套</div><div class="ln j" style="left:28.5px;width:531.5px;top:145.8px">装<span class="cm2">。</span>黑色的眼珠<span class="cm">，</span>像鞋上的纽扣似的<span class="cm">，</span>闪闪发亮<span class="cm">，</span>脸颊如同板油般柔软细腻<span class="cm2">。</span>黑色</div><div class="ln j" style="left:28.5px;width:531.5px;top:167.8px">玻璃办公桌看上去就像拿破仑的墓碑一样<span class="cm">，</span>她坐在桌子前面<span class="cm">，</span>叼着一根黑色烟斗<span class="cm2">。</span></div><div class="ln" style="left:28.5px;top:189.8px">烟斗不是很长<span class="cm">，</span>跟卷起来的雨伞差不多<span class="cm2">。</span>她说<span class="cm">：</span><span class="q1">“</span>我需要一个男人<span class="cm2">。</span><span class="q2">”</span></div><div class="ln" style="left:57.5px;top:225.8px">我看着她弹着烟头<span class="cm">，</span>烟灰掉落在明亮的桌上<span class="cm">，</span>一缕缕烟雾随风吹向窗外<span class="cm2">。</span></div><div class="ln j" style="left:57.5px;width:502.5px;top:262.8px"><span class="q1">“</span>我需要的这个男人必须足够帅气英俊<span class="cm">，</span>这样才能吸引到那个有阶级观念的妇</div><div class="ln j" style="left:28.5px;width:531.5px;top:284.8px">人<span class="cm">，</span>但同时也得足够坚强抗压<span class="cm">，</span>即使没有武器也能对付强敌<span class="cm2">。</span>这个男人要像被禁锢</div><div class="ln j" style="left:28.5px;width:531.5px;top:306.8px">的蜥蜴般灵活<span class="cm">，</span>像伍迪·艾伦般能说会道<span class="cm">，</span>最好是比他更能说<span class="cm">，</span>并且要足够乐观<span class="cm">，</span>即</div><div class="ln j" style="left:28.5px;width:531.5px;top:328.8px">使被运啤酒的卡车撞了头<span class="cm">，</span>也能把它想象成是被漂亮女人拿面包砸的<span class="cm2">。</span>我需要这样</div><div class="ln" style="left:28.5px;top:350.8px">一个男人<span class="cm2">。</span><span class="q2">”</span></div></div>
<div class="pg" style="left:329px;top:522px;width:599px;height:376px"><div class="ln j" style="left:57.5px;width:502.5px;top:28.8px"><span class="q1">“</span>这事好办<span class="cm2">。</span><span class="q2">”</span>我说<span class="cm">，</span><span class="q1">“</span>你去找纽约洋基队的罗伯特·多纳特和游艇俱乐部的小</div><div class="ln" style="left:28.5px;top:50.8px">伙子们就行了<span class="cm2">。</span><span class="q2">”</span></div><div class="ln j" style="left:57.5px;width:502.5px;top:87.8px"><span class="q1">“</span>或许你可以<span class="cm2">。</span><span class="q2">”</span>安娜说<span class="cm">，</span><span class="q1">“</span>好好拾掇下自己<span class="cm2">。</span>我付你二十美元一天的佣金<span class="cm">，</span></div><div class="ln j" style="left:28.5px;width:531.5px;top:109.8px">外加额外的津贴<span class="cm2">。</span>我可是好几年都没给人介绍工作了<span class="cm">，</span>不过这次我自己没法办到<span class="cm2">。</span></div><div class="ln j" style="left:28.5px;width:531.5px;top:131.8px">我对侦探行业虽然看好<span class="cm">，</span>但也不能为了赚钱丢了自己擅长做的事<span class="cm2">。</span>我们先看看格雷</div><div class="ln" style="left:28.5px;top:153.8px">迪斯对你感觉如何<span class="cm2">。</span><span class="q2">”</span></div><div class="ln j" style="left:57.5px;width:502.5px;top:191.8px">她将烟斗倒转过来<span class="cm">，</span>然后按了一下黑色通信盒上的按钮<span class="cm2">。</span><span class="q1">“</span>亲爱的<span class="cm">，</span>进来把我</div><div class="ln" style="left:28.5px;top:213.8px">的烟灰缸清理一下<span class="cm2">。</span><span class="q2">”</span></div><div class="ln" style="left:57.5px;top:249.8px">我们在屋里等着<span class="cm2">。</span></div><div class="ln j" style="left:57.5px;width:502.5px;top:286.8px">这时门开了<span class="cm">，</span>一个身穿棕色连衣裙的高挑女人走进屋里<span class="cm">，</span>打扮得跟温莎公爵夫</div><div class="ln" style="left:28.5px;top:308.8px">人似的<span class="cm2">。</span></div><div class="ln j" style="left:57.5px;width:502.5px;top:346.8px">她优雅地穿过房间<span class="cm">，</span>清空了安娜的烟灰缸<span class="cm">，</span>又轻拍了下安娜的脸颊<span class="cm">，</span>然后快速</div><div class="ln" style="left:28.5px;top:367.8px">朝我扫了一眼<span class="cm">，</span>便走出了房间<span class="cm2">。</span></div></div>
<div class="a" style="left:928px;top:91px;width:17px;height:807px;background:linear-gradient(90deg,#c8c8c8,#dcdcdc 8px,#dcdcdc)"></div>
<svg class="a" style="left:938px;top:99px;" width="7" height="5" viewBox="0 0 7 5" fill="none" stroke="#333" stroke-width="1.2" stroke-linecap="round" stroke-linejoin="round"><path d="M0 4.5L3.5 0.5L7 4.5Z" fill="#888" stroke="none"/></svg>
<div class="a" style="left:936px;top:118px;width:12px;height:43px;background:#f3f3f3;border:1px solid #9a9a9a;border-radius:6px"></div>
<svg class="a" style="left:938px;top:884px;" width="7" height="5" viewBox="0 0 7 5" fill="none" stroke="#333" stroke-width="1.2" stroke-linecap="round" stroke-linejoin="round"><path d="M0 0.5L3.5 4.5L7 0.5Z" fill="#888" stroke="none"/></svg>
<div class="a" style="left:902.5px;top:102.5px;width:29.5px;height:29.5px;border-radius:50%;background:#4086ec;box-shadow:0 0 0 1px #fff"></div>
<svg class="a" style="left:906px;top:106px;" width="22" height="22" viewBox="0 0 22 22" fill="none" stroke="#333" stroke-width="1.2" stroke-linecap="round" stroke-linejoin="round"><path d="M6 5H16V8.4H8.2V12.6H6Z" fill="#fff" stroke="none"/><path d="M10.6 9.4H17.6V16.4H10.6Z" stroke="#fff" stroke-width="1.2" fill="#4086ec" stroke-linecap="butt"/><path d="M12.2 10.8L12.9 14.7L14.1 12.2L15.3 14.7L16 10.8" stroke="#fff" stroke-width="1"/><path d="M3.4 12.2V16.8H8.2M7 15.5L8.4 16.8L7 18.1" stroke="#fff" stroke-width="1.1"/></svg>
<div class="a" style="left:41px;top:91px;width:278px;height:807px;background:#f3f3f3"></div>
<div class="a" style="left:57.9px;top:110.7px;font-size:13px;line-height:20px;color:#333;transform:scale(1.05);transform-origin:0 0;">缩略图</div>
<svg class="a" style="left:117px;top:114px;" width="14" height="13" viewBox="0 0 14 13" fill="none" stroke="#333" stroke-width="1.2" stroke-linecap="round" stroke-linejoin="round"><path d="M1.6 1.3H12.4V11.5H1.6Z" stroke="#333" stroke-width="1.1"/><path d="M2 10L5.3 7L8 9L12 6" stroke="#333" stroke-width="1"/><circle cx="9.4" cy="4" r="0.9" fill="#333" stroke="none"/></svg>
<div class="a" style="left:142px;top:120.6px;width:15px;height:1.1px;background:#555"></div>
<div class="a" style="left:169px;top:120.6px;width:67px;height:1px;background:#bdbdbd"></div>
<div class="a" style="left:188px;top:118px;width:1px;height:6px;background:#bdbdbd"></div>
<div class="a" style="left:157px;top:115px;width:12px;height:12px;border-radius:50%;border:1.1px solid #444;background:#ececec"></div>
<svg class="a" style="left:245px;top:113px;" width="18" height="16" viewBox="0 0 18 16" fill="none" stroke="#333" stroke-width="1.2" stroke-linecap="round" stroke-linejoin="round"><path d="M1.5 1.3H16.5V14.6H1.5Z" stroke="#333" stroke-width="1.2"/><path d="M2 12.5L6.3 8.5L10 11.2L16 7.3" stroke="#333" stroke-width="1.1"/><circle cx="12.3" cy="4.5" r="1.1" fill="#333" stroke="none"/></svg>
<svg class="a" style="left:283px;top:114px;" width="14" height="14" viewBox="0 0 14 14" fill="none" stroke="#333" stroke-width="1.2" stroke-linecap="round" stroke-linejoin="round"><path d="M1.4 1.4L12.6 12.6M12.6 1.4L1.4 12.6" stroke="#666" stroke-width="1"/></svg>
<div class="a" style="left:50px;top:141.5px;width:260px;height:1.3px;background:#8e8e9a"></div>
<div class="a" style="left:41px;top:153px;width:255px;height:721px;overflow:hidden">
<div class="a" style="left:56px;top:-33px;width:146px;height:63px;background:#fff"></div>
</div>
<div class="a" style="left:156px;top:193px;width:20px;text-align:center;font-size:13px;line-height:20px;color:#222">2</div>
<div class="a" style="left:95px;top:218px;width:151px;height:194px;border:2px solid #e26b6b;background:#c2c0c1;overflow:hidden"><div style="position:absolute;left:0;top:0;width:146px;height:190px"><div style="position:absolute;left:0;top:0;width:599px;height:800px;transform:scale(0.245);transform-origin:0 0"><div class="tl" style="left:0;width:599px;text-align:center;top:51.2px;font-size:30px;line-height:42px;-webkit-text-stroke:0.6px #000;color:#222">作者简介</div><div class="tl" style="left:57.5px;top:113.6px">安娜·哈尔西</div><div class="tl j" style="left:57.5px;width:504.5px;top:151.1px">是个中年妇女，大约二百四十磅重，一脸油光，穿着定制的黑色套装。黑色的</div><div class="tl" style="left:28.5px;top:171.9px">眼珠，像鞋上的纽扣似的，闪闪发亮，脸颊</div><div class="tl j" style="left:57.5px;width:504.5px;top:209.5px">如同板油般柔软细腻。黑色玻璃办公桌看上去就像拿破仑的墓碑一样，她坐在</div><div class="tl j" style="left:28.5px;width:533.5px;top:230.3px">桌子前面，叼着一根黑色烟斗。烟斗不是很长，跟卷起来的雨伞差不多。她说：我</div><div class="tl" style="left:28.5px;top:254.8px">需要一个男人。我看着她弹着烟头，烟灰掉落在明亮的桌上，一缕缕烟雾随风</div><div class="tl" style="left:28.5px;top:275.2px">吹向窗外。我</div><div class="tl j" style="left:57.5px;width:504.5px;top:311.9px">需要的这个男人必须足够帅气英俊，这样才能吸引到那个有阶级观念的妇人，</div><div class="tl" style="left:28.5px;top:333.6px">但同时也得足够坚强抗压，即使没</div></div></div></div>
<div class="a" style="left:97px;top:306px;width:147px;height:105px;border:1px solid #222;background:#fff;overflow:hidden"><div style="position:absolute;left:-1px;top:-1px"><div style="position:absolute;left:0;top:0;width:599px;height:800px;transform:scale(0.245);transform-origin:0 0"><div class="tl" style="left:0;width:599px;text-align:center;top:27.2px;font-size:30px;line-height:42px;-webkit-text-stroke:0.6px #000;color:#222">找麻烦是我的职业</div><div class="tl" style="left:57.5px;top:83.4px">有</div><div class="tl j" style="left:57.5px;width:504.5px;top:127.5px">武器也能对付强敌。这个男人要像被禁锢的蜥蜴般灵活，像伍迪·艾伦般能说</div><div class="tl j" style="left:28.5px;width:533.5px;top:149.5px">会道，最好是比他更能说，并且要足够乐观，即使被运啤酒的卡车撞了头，也能把</div><div class="tl j" style="left:28.5px;width:533.5px;top:171.5px">它想象成是被漂亮女人拿面包砸的。我需要这样一个男人。这事好办。我说，你去</div><div class="tl" style="left:28.5px;top:193.6px">找纽约洋基队的罗伯特·多纳特和游艇俱乐部的小伙子们就行了。</div><div class="tl" style="left:57.5px;top:229.5px">或许你可以。安娜说，好好拾掇下自己。我付你二十美元一天的佣金，外加</div><div class="tl j" style="left:57.5px;width:504.5px;top:267.1px">额外的津贴。我可是好几年都没给人介绍工作了，不过这次我自己没法办到。</div><div class="tl j" style="left:28.5px;width:533.5px;top:289.1px">我对侦探行业虽然看好，但也不能为了赚钱丢了自己擅长做的事。我们先看看格雷</div><div class="tl j" style="left:28.5px;width:533.5px;top:311.1px">迪斯对你感觉如何。她将烟斗倒转过来，然后按了一下黑色通信盒上的按钮。亲爱</div><div class="tl j" style="left:28.5px;width:533.5px;top:333.2px">的，进来把我的烟灰缸清理一下。我们在屋里等着。这时门开了，一个身穿棕色连</div><div class="tl" style="left:28.5px;top:355.2px">衣裙</div></div></div></div>
<div class="a" style="left:239px;top:406px;width:5px;height:5px;background:#333"></div>
<div class="a" style="left:156px;top:419.5px;width:20px;text-align:center;font-size:13px;line-height:20px;color:#e86aa0">3</div>
<div class="a" style="left:97px;top:447px;width:146px;height:190px;background:#fff;overflow:hidden"><div style="position:absolute;left:0;top:0;width:599px;height:800px;transform:scale(0.245);transform-origin:0 0"><div class="tl j" style="left:57.5px;width:504.5px;top:29.1px">的高挑女人走进屋里，打扮得跟温莎公爵夫人似的。她优雅地穿过房间，清空</div><div class="tl" style="left:28.5px;top:54.0px">了安娜的烟灰缸</div><div class="tl j" style="left:57.5px;width:504.5px;top:87.5px">，又轻拍了下安娜的脸颊，然后快速朝我扫了一眼，便走出了房间。安娜·哈</div><div class="tl j" style="left:28.5px;width:533.5px;top:109.9px">尔西是个中年妇女，大约二百四十磅重，一脸油光，穿着定制的黑色套装。黑色的</div><div class="tl j" style="left:28.5px;width:533.5px;top:132.4px">眼珠，像鞋上的纽扣似的，闪闪发亮，脸颊如同板油般柔软细腻。黑色玻璃办公桌</div><div class="tl" style="left:28.5px;top:154.8px">看上去就像拿破仑的</div><div class="tl j" style="left:57.5px;width:504.5px;top:191.5px">墓碑一样，她坐在桌子前面，叼着一根黑色烟斗。烟斗不是很长，跟卷起来的</div><div class="tl" style="left:28.5px;top:214.0px">雨伞差不多。她说：</div><div class="tl" style="left:57.5px;top:249.9px">我需要一个男人</div><div class="tl j" style="left:57.5px;width:504.5px;top:287.5px">。我看着她弹着烟头，烟灰掉落在明亮的桌上，一缕缕烟雾随风吹向窗外。我</div><div class="tl" style="left:28.5px;top:310.3px">需要的这</div><div class="tl j" style="left:57.5px;width:504.5px;top:347.1px">个男人必须足够帅气英俊，这样才能吸引到那个有阶级观念的妇人，但同时也</div><div class="tl" style="left:28.5px;top:369.1px">得足够坚强抗压，即使没有武</div><div class="tl" style="left:57.5px;top:405.8px">器也能对付强敌。这个男人要像被禁锢的蜥蜴般灵活，像伍迪·艾伦般能说</div><div class="tl j" style="left:57.5px;width:504.5px;top:444.6px">会道，最好是比他更能说，并且要足够乐观，即使被运啤酒的卡车撞了头，也</div><div class="tl" style="left:28.5px;top:467.1px">能把它想象成是被漂亮女</div><div class="tl j" style="left:57.5px;width:504.5px;top:501.7px">人拿面包砸的。我需要这样一个男人。这事好办。我说，你去找纽约洋基队的</div><div class="tl" style="left:28.5px;top:526.2px">罗伯特·多纳特和游艇俱乐部的小伙子们就行了</div><div class="tl" style="left:57.5px;top:560.9px">。或许你可以。安娜说</div><div class="tl j" style="left:57.5px;width:504.5px;top:597.7px">，好好拾掇下自己。我付你二十美元一天的佣金，外加额外的津贴。我可是好</div><div class="tl j" style="left:28.5px;width:533.5px;top:620.1px">几年都没给人介绍工作了，不过这次我自己没法办到。我对侦探行业虽然看好，但</div><div class="tl" style="left:28.5px;top:642.6px">也不能为了赚钱丢了自己擅长做的事。我们先看看格雷迪斯对</div><div class="tl" style="left:57.5px;top:679.3px">你感觉如何。她将烟斗倒转过来，然后按了一下黑色通信盒上的按钮。亲爱</div><div class="tl" style="left:28.5px;top:702.2px">的，</div></div></div>
<div class="a" style="left:156px;top:645.5px;width:20px;text-align:center;font-size:13px;line-height:20px;color:#222">4</div>
<div class="a" style="left:97px;top:674px;width:146px;height:190px;background:#fff;overflow:hidden"><div style="position:absolute;left:0;top:0;width:599px;height:800px;transform:scale(0.245);transform-origin:0 0"><div class="tl" style="left:57.5px;top:28.7px">进来把我的烟灰缸清</div><div class="tl j" style="left:57.5px;width:504.5px;top:66.2px">理一下。我们在屋里等着。这时门开了，一个身穿棕色连衣裙的高挑女人走进</div><div class="tl" style="left:28.5px;top:90.7px">屋里，打</div><div class="tl" style="left:57.5px;top:128.3px">扮得跟温莎公爵</div><div class="tl j" style="left:57.5px;width:504.5px;top:165.0px">夫人似的。她优雅地穿过房间，清空了安娜的烟灰缸，又轻拍了下安娜的脸颊</div><div class="tl" style="left:28.5px;top:188.7px">，然后快速朝我扫了一眼，便走出了房间。安娜·哈尔西</div><div class="tl" style="left:57.5px;top:222.2px">是个中年妇女，大约二百四十磅重，一脸油光，穿着定制的黑色套装。黑色</div><div class="tl" style="left:28.5px;top:246.6px">的眼珠，像鞋上的纽扣似的，闪</div><div class="tl" style="left:57.5px;top:283.4px">闪发亮，脸颊如同板油般柔软细腻。黑色玻</div><div class="tl" style="left:57.5px;top:320.1px">璃办公桌看上去就像拿破仑的墓碑一样，她坐在桌子前面，叼着一根</div><div class="tl j" style="left:57.5px;width:504.5px;top:356.8px">黑色烟斗。烟斗不是很长，跟卷起来的雨伞差不多。她说：我需要一个男人。</div><div class="tl j" style="left:28.5px;width:533.5px;top:378.1px">我看着她弹着烟头，烟灰掉落在明亮的桌上，一缕缕烟雾随风吹向窗外。我需要的</div><div class="tl" style="left:28.5px;top:398.5px">这个男人必须足够帅气英俊，这样才能吸引到</div><div class="tl j" style="left:57.5px;width:504.5px;top:432.8px">那个有阶级观念的妇人，但同时也得足够坚强抗压，即使没有武器也能对付强</div><div class="tl j" style="left:28.5px;width:533.5px;top:454.8px">敌。这个男人要像被禁锢的蜥蜴般灵活，像伍迪·艾伦般能说会道，最好是比他更</div><div class="tl" style="left:28.5px;top:477.7px">能说，并且要足够乐</div><div class="tl" style="left:57.5px;top:514.4px">观，即使被运啤酒的卡车撞了头，也能</div><div class="tl j" style="left:57.5px;width:504.5px;top:551.1px">把它想象成是被漂亮女人拿面包砸的。我需要这样一个男人。这事好办。我说</div><div class="tl j" style="left:28.5px;width:533.5px;top:573.2px">，你去找纽约洋基队的罗伯特·多纳特和游艇俱乐部的小伙子们就行了。或许你可</div><div class="tl j" style="left:28.5px;width:533.5px;top:595.2px">以。安娜说，好好拾掇下自己。我付你二十美元一天的佣金，外加额外的津贴。我</div><div class="tl" style="left:28.5px;top:616.4px">可是好几年都</div><div class="tl" style="left:57.5px;top:650.7px">没给人介绍工作了，不过这</div><div class="tl j" style="left:57.5px;width:504.5px;top:687.5px">次我自己没法办到。我对侦探行业虽然看好，但也不能为了赚钱丢了自己擅长</div><div class="tl j" style="left:28.5px;width:533.5px;top:711.9px">做的事。我们先看看格雷迪斯对你感觉如何。她将烟斗倒转过来，然后按了一下黑</div></div></div>
<div class="a" style="left:296px;top:153px;width:14px;height:721px;background:#dcdcdc"></div>
<svg class="a" style="left:299px;top:159px;" width="8" height="5" viewBox="0 0 8 5" fill="none" stroke="#333" stroke-width="1.2" stroke-linecap="round" stroke-linejoin="round"><path d="M0 4.5L4 0.5L8 4.5Z" fill="#888" stroke="none"/></svg>
<div class="a" style="left:297px;top:176px;width:13px;height:44px;background:#f3f3f3;border:1px solid #9a9a9a;border-radius:6.5px"></div>
<svg class="a" style="left:299px;top:862px;" width="8" height="5" viewBox="0 0 8 5" fill="none" stroke="#333" stroke-width="1.2" stroke-linecap="round" stroke-linejoin="round"><path d="M0 0.5L4 4.5L8 0.5Z" fill="#888" stroke="none"/></svg>
<div class="a" style="left:50px;top:874px;width:246px;height:14px;background:#dcdcdc"></div>
<svg class="a" style="left:57px;top:877px;" width="5" height="8" viewBox="0 0 5 8" fill="none" stroke="#333" stroke-width="1.2" stroke-linecap="round" stroke-linejoin="round"><path d="M4.5 0L0.5 4L4.5 8Z" fill="#888" stroke="none"/></svg>
<svg class="a" style="left:284px;top:877px;" width="5" height="8" viewBox="0 0 5 8" fill="none" stroke="#333" stroke-width="1.2" stroke-linecap="round" stroke-linejoin="round"><path d="M0.5 0L4.5 4L0.5 8Z" fill="#888" stroke="none"/></svg>
<div class="a" style="left:70px;top:874px;width:192px;height:14px;background:#f3f3f3;border:1px solid #9a9a9a;border-radius:7px"></div>
<div class="a" style="left:319px;top:91px;width:10px;height:807px;background:linear-gradient(90deg,#ececec,#d9d9d9 60%,#c4c4c4)"></div>
<div class="a" style="left:0px;top:91px;width:945px;height:5px;background:linear-gradient(rgba(0,0,0,0.07),rgba(0,0,0,0.02) 40%,rgba(0,0,0,0))"></div>
<div class="a" style="left:0px;top:896.6px;width:945px;height:1.4px;background:#d6d6d6"></div></body></html>
